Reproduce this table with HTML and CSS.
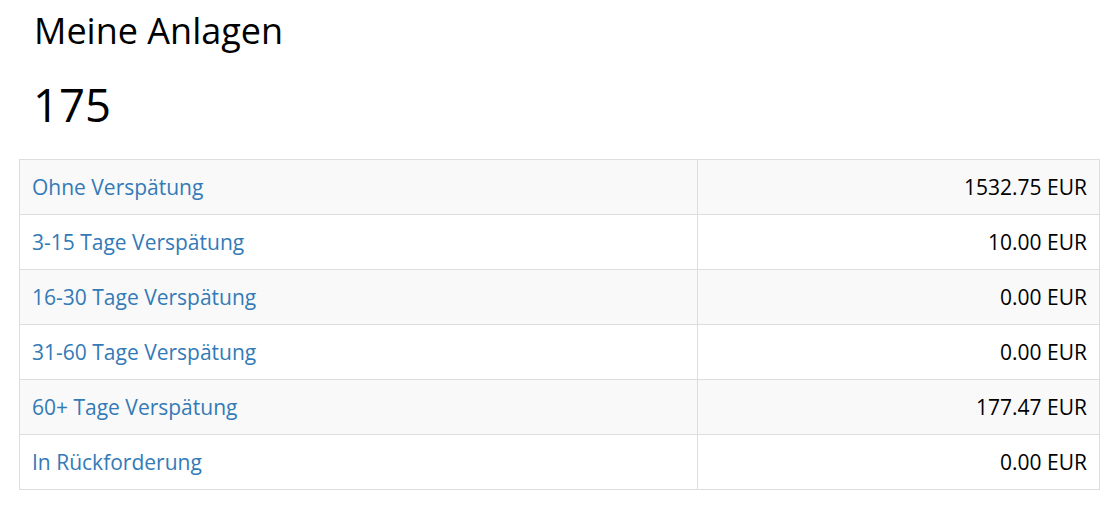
FILE: index.html
```html
<!DOCTYPE html>
<html lang="de">
<head>
<meta charset="utf-8">
<title>Meine Anlagen</title>
<link rel="stylesheet" href="styles.css">
</head>
<body>
<main class="page">
  <h1 class="title">Meine Anlagen</h1>
  <div class="count">175</div>
  <table class="summary">
    <colgroup><col class="col-label"><col class="col-value"></colgroup>
    <tbody>
      <tr><td><a href="#">Ohne Verspätung</a></td><td class="amount">1532.75 EUR</td></tr>
      <tr><td><a href="#">3-15 Tage Verspätung</a></td><td class="amount">10.00 EUR</td></tr>
      <tr><td><a href="#">16-30 Tage Verspätung</a></td><td class="amount">0.00 EUR</td></tr>
      <tr><td><a href="#">31-60 Tage Verspätung</a></td><td class="amount">0.00 EUR</td></tr>
      <tr><td><a href="#">60+ Tage Verspätung</a></td><td class="amount">177.47 EUR</td></tr>
      <tr><td><a href="#">In Rückforderung</a></td><td class="amount">0.00 EUR</td></tr>
    </tbody>
  </table>
</main>
</body>
</html>
```
FILE: styles.css
```css
html, body {
  margin: 0;
  padding: 0;
  background: #fff;
}
body {
  font-family: "Open Sans", sans-serif;
  color: #000;
}
.page {
  padding: 0 18px 0 19px;
}
.title {
  margin: 0;
  padding: 8px 0 0 15px;
  font-size: 36px;
  font-weight: 400;
  line-height: 46px;
}
.count {
  padding: 22px 0 0 14px;
  font-size: 45.5px;
  line-height: 56px;
  margin-bottom: 27px;
}
.summary {
  width: 1081px;
  border-collapse: collapse;
  border: 1px solid #ddd;
  font-size: 21px;
}
.col-label { width: 678px; }
.summary td {
  border: 1px solid #ddd;
  padding: 0 12px;
  height: 54px;
  line-height: 28px;
  vertical-align: middle;
}
.summary tr:nth-child(odd) td {
  background: #f9f9f9;
}
.summary a {
  color: #337ab7;
  text-decoration: none;
}
.amount {
  text-align: right;
}
```
